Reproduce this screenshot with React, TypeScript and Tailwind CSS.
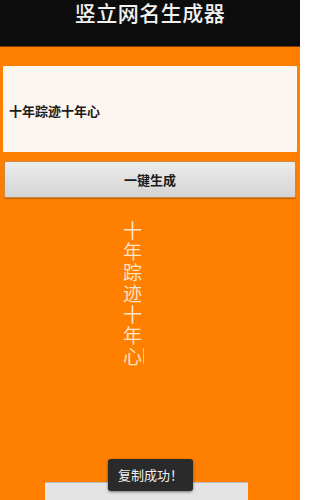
import { useState } from 'react'

const NAME = '十年踪迹十年心'

export default function App() {
  const [name, setName] = useState(NAME)
  const chars = Array.from(name)

  return (
    <div
      className="relative flex h-[500px] w-[300px] flex-col overflow-hidden bg-[#ff7f00]"
      style={{ fontFamily: '"Noto Sans CJK SC", "Noto Sans", sans-serif' }}
    >
      <header className="h-[47px] shrink-0 border-b border-[#7a3a00] bg-[#0d0d0d] text-center">
        <h1 className="pt-px text-[21px] leading-[22px] font-medium tracking-[0.5px] text-[#f2f2f2]">
          竖立网名生成器
        </h1>
      </header>

      <div className="flex flex-1 flex-col px-[3px] pt-[19px]">
        <input
          value={name}
          onChange={e => setName(e.target.value)}
          className="h-[86px] w-full rounded-[1px] bg-[#fdf6f0] pl-[6px] pt-[3px] text-[13px] font-bold text-[#1c1c1c] outline-none"
        />

        <button
          type="button"
          className="mx-[1px] mt-[9px] h-[37px] rounded-[2px] border border-[#c98a4a] bg-gradient-to-b from-[#ececec] to-[#d4d4d4] text-[13px] font-bold text-[#1a1a1a] shadow-[0_1px_1px_rgba(0,0,0,0.25)]"
        >
          一键生成
        </button>

        <div className="mt-[21px] flex w-[292px] flex-col items-start pl-[120px]">
          {chars.map((c, i) => (
            <span key={i} className="relative block h-[21px] text-[19px] leading-[21px] text-[#fde3c6]">
              {c}
              {i === chars.length - 1 && (
                <span className="absolute top-[3px] right-[-2px] h-[16px] w-px bg-[#fde3c6]/70" />
              )}
            </span>
          ))}
        </div>
      </div>

      <div className="absolute bottom-0 left-[45px] h-[18px] w-[203px] border-t border-[#bdbdbd] bg-[#e4e4e4]" />

      <div className="absolute top-[459px] left-[108px] flex h-[32px] w-[85px] items-center justify-center rounded-[3px] bg-[#2a2a2a] text-[13px] text-[#f0f0f0] shadow-[0_1px_3px_rgba(0,0,0,0.5)]">
        复制成功！
      </div>
    </div>
  )
}
